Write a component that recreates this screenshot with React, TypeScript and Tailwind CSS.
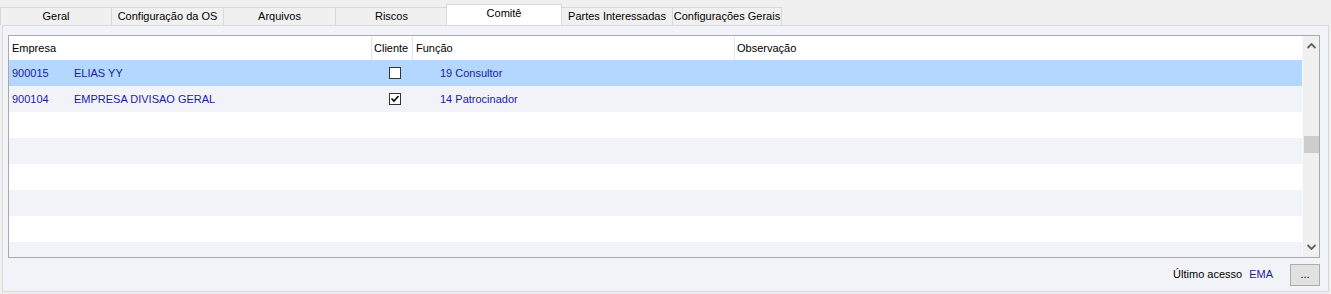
import React from "react";

const tabs = [
  { label: "Geral", w: 111 },
  { label: "Configuração da OS", w: 112 },
  { label: "Arquivos", w: 112 },
  { label: "Riscos", w: 112 },
  { label: "Comitê", w: 114, active: true },
  { label: "Partes Interessadas", w: 111 },
  { label: "Configurações Gerais", w: 110 },
];

const rows = [
  { code: "900015", name: "ELIAS YY", checked: false, func: "19 Consultor", sel: true },
  { code: "900104", name: "EMPRESA DIVISAO GERAL", checked: true, func: "14 Patrocinador" },
  {}, {}, {}, {}, {}, {},
];

function Check({ checked }: { checked: boolean }) {
  return (
    <div className="w-[12px] h-[12px] border border-[#333] bg-white flex items-center justify-center">
      {checked && (
        <svg width="10" height="10" viewBox="0 0 10 10">
          <path d="M1.5 4.5 L4 7 L8.5 2" stroke="#000" strokeWidth="1.6" fill="none" />
        </svg>
      )}
    </div>
  );
}

export default function App() {
  return (
    <div
      className="w-[1331px] h-[294px] bg-[#f0f0f0] overflow-hidden text-[11px] leading-none whitespace-nowrap"
      style={{ fontFamily: "Tahoma, 'Liberation Sans', Arial, sans-serif" }}
    >
      <div className="h-[25px] flex items-end">
        {tabs.map((t) =>
          t.active ? (
            <div
              key={t.label}
              className="h-[21px] bg-white border border-b-0 border-[#d9d9d9] flex items-center justify-center text-black pb-[4px] -mx-[1px] relative z-10 shrink-0"
              style={{ width: t.w + 2 }}
            >
              {t.label}
            </div>
          ) : (
            <div
              key={t.label}
              className="h-[18px] bg-[#f0f0f0] border border-b-0 border-r-0 last:border-r border-[#d9d9d9] flex items-center justify-center text-black shrink-0"
              style={{ width: t.w }}
            >
              {t.label}
            </div>
          )
        )}
      </div>
      <div className="ml-[2px] w-[1327px] h-[267px] border border-[#d9d9d9] bg-[#f2f3f8] pt-[9px] pl-[5px] flex flex-col">
        <div className="w-[1312px] h-[223px] shrink-0 border border-[#a9a9a9] bg-white flex overflow-hidden">
          <div className="flex-1 flex flex-col overflow-hidden">
            <div className="h-[24px] shrink-0 flex items-center bg-white">
              <div className="w-[363px] pl-[3px] border-r border-[#e5e5e5] h-full flex items-center">Empresa</div>
              <div className="w-[41px] pl-[2px] border-r border-[#e5e5e5] h-full flex items-center">Cliente</div>
              <div className="w-[322px] pl-[3px] border-r border-[#e5e5e5] h-full flex items-center">Função</div>
              <div className="flex-1 pl-[2px] h-full flex items-center">Observação</div>
            </div>
            {rows.map((r: any, i) => (
              <div
                key={i}
                className={
                  "h-[26px] shrink-0 flex items-center text-[#1c1c9c] " +
                  (r.sel ? "bg-[#b3d7ff]" : i % 2 === 1 ? "bg-[#f2f3f9]" : "bg-white")
                }
              >
                <div className="w-[65px] pl-[3px]">{r.code}</div>
                <div className="w-[298px]">{r.name}</div>
                <div className="w-[41px] flex justify-center pl-[4px]">
                  {r.code && <Check checked={r.checked} />}
                </div>
                <div className="w-[322px] pl-[27px]">{r.func}</div>
              </div>
            ))}
          </div>
          <div className="w-[17px] shrink-0 border-l border-[#f8f8f8] bg-[#f0f0f0] flex flex-col items-center">
            <div className="h-[20px] shrink-0 flex items-center justify-center">
              <svg width="9" height="6" viewBox="0 0 9 6">
                <path d="M0.5 5 L4.5 1 L8.5 5" stroke="#606060" strokeWidth="1.8" fill="none" />
              </svg>
            </div>
            <div className="h-[80px] shrink-0" />
            <div className="w-[15px] h-[17px] shrink-0 bg-[#cdcdcd]" />
            <div className="flex-1" />
            <div className="h-[20px] shrink-0 flex items-center justify-center">
              <svg width="9" height="6" viewBox="0 0 9 6">
                <path d="M0.5 1 L4.5 5 L8.5 1" stroke="#606060" strokeWidth="1.8" fill="none" />
              </svg>
            </div>
          </div>
        </div>
        <div className="flex items-center justify-end h-[33px] pr-[8px]">
          <span className="text-black">Último acesso</span>
          <span className="ml-[7px] text-[#1c1c9c]">EMA</span>
          <div className="ml-[17px] w-[30px] h-[22px] bg-[#e1e1e1] border border-[#adadad] flex items-end justify-center pb-[5px] text-black">
            ...
          </div>
        </div>
      </div>
    </div>
  );
}
